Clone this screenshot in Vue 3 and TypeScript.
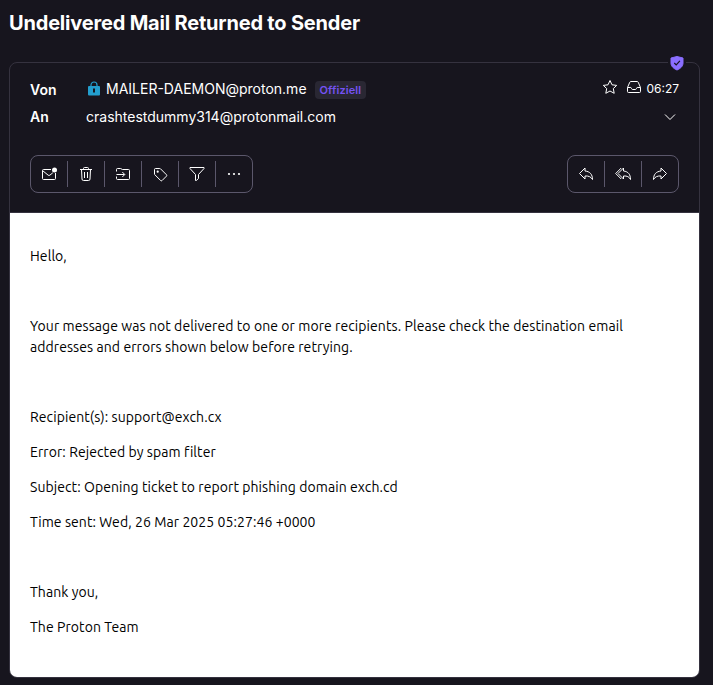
<script setup lang="ts">
interface IconDef {
  name: string
  label: string
}

const leftActions: IconDef[] = [
  { name: 'unread', label: 'Als ungelesen markieren' },
  { name: 'trash', label: 'In den Papierkorb' },
  { name: 'move', label: 'Verschieben' },
  { name: 'tag', label: 'Label' },
  { name: 'filter', label: 'Filtern' },
  { name: 'more', label: 'Mehr' },
]

const rightActions: IconDef[] = [
  { name: 'reply', label: 'Antworten' },
  { name: 'replyAll', label: 'Allen antworten' },
  { name: 'forward', label: 'Weiterleiten' },
]

const strokes: Record<string, string> = {
  unread: 'M10 3.5H2.500a1 1 0 0 0-1 1v8a1 1 0 0 0 1 1h11a1 1 0 0 0 1-1V7M1.800 4.800l5.400 4.400a1.300 1.300 0 0 0 1.600 0L11.800 6.800',
  trash: 'M2 3.500h12M5.500 3.300V2.500a1 1 0 0 1 1-1h3a1 1 0 0 1 1 1v.8M3.500 3.700l.5 9.300a1.500 1.500 0 0 0 1.500 1.500h5A1.500 1.500 0 0 0 12 13l.5-9.300M6.500 6v6M9.500 6v6',
  move: 'M1.500 5.500V3.500a1 1 0 0 1 1-1h3l2 1h6a1 1 0 0 1 1 1v8a1 1 0 0 1-1 1h-11a1 1 0 0 1-1-1v-2M1.500 8.500h8M7.300 6l2.500 2.500-2.500 2.500',
  tag: 'M2.500 3.500a1 1 0 0 1 1-1h4.300a1 1 0 0 1 .7.300l6 6a1 1 0 0 1 0 1.300l-4.500 4.500a1 1 0 0 1-1.300 0l-5.900-5.900a1 1 0 0 1-.3-.7z',
  filter: 'M1 1.500h14v1L9.500 8.500v4L7.300 14.500H6.500v-6L1 2.500z',
  reply: 'M7 2 1.500 7.500 7 13v-3c3.500-.3 6 .8 7.500 3.500 0-5-2.500-8-7.500-8.500z',
  replyAll: 'M8.500 2 3 7.500 8.500 13v-3c3.500-.3 5.800.8 7 3.500 0-5-2.200-8-7-8.500zM6.200 2 .7 7.500 6.200 13',
  forward: 'M9 2l5.500 5.500L9 13v-3c-3.500-.3-6 .8-7.500 3.500 0-5 2.500-8 7.500-8.500z',
}

const details: string[] = [
  'Recipient(s): support@exch.cx',
  'Error: Rejected by spam filter',
  'Subject: Opening ticket to report phishing domain exch.cd',
  'Time sent: Wed, 26 Mar 2025 05:27:46 +0000',
]
</script>

<template>
  <main class="view">
    <h1 class="subject">Undelivered Mail Returned to Sender</h1>
    <article class="card">
      <svg class="shield" viewBox="0 0 14 16">
        <path d="M7 1.500 13 3v5c0 3.300-2.500 5.500-6 7-3.500-1.500-6-3.700-6-7V3z" fill="#8a6eff" stroke="#8a6eff" stroke-width="1" stroke-linejoin="round" />
        <path d="m4.300 8 1.900 1.900 3.700-4" fill="none" stroke="#17151e" stroke-width="1.200" />
      </svg>

      <header class="head">
        <div class="row">
          <span class="label">Von</span>
          <svg class="lock" viewBox="0 0 12 15">
            <path d="M3 6V4a3 3 0 0 1 6 0v2" fill="none" stroke="#239ece" stroke-width="1.200" />
            <rect y="5" width="12" height="9.500" rx="1" fill="#239ece" />
            <path d="M5 7.500h2v4H5z" fill="#17151e" />
          </svg>
          <span class="address">MAILER-DAEMON@proton.me</span>
          <span class="badge">Offiziell</span>
          <span class="meta">
            <svg class="icon star" viewBox="0 0 16 16">
              <path d="m8 1.500 2 4.300 4.700.6-3.400 3.200.9 4.700L8 12l-4.200 2.300.9-4.700-3.400-3.200L6 5.800z" />
            </svg>
            <svg class="icon inbox" viewBox="0 0 16 16">
              <path d="M1.500 8.500 3.800 3.200a1.200 1.200 0 0 1 1.100-.7h6.200a1.200 1.200 0 0 1 1.100.7l2.300 5.300v4a1 1 0 0 1-1 1h-11a1 1 0 0 1-1-1zM1.500 8.500h3.300c.7 0 .7 2 1.700 2h3c1 0 1-2 1.700-2h3.300" />
            </svg>
            <time class="time">06:27</time>
          </span>
        </div>
        <div class="row second">
          <span class="label">An</span>
          <span class="address">crashtestdummy314@protonmail.com</span>
          <svg class="chevron" viewBox="0 0 16 16"><path d="m3 5.500 5 5 5-5" /></svg>
        </div>

        <div class="toolbar">
          <div v-for="(group, i) in [leftActions, rightActions]" :key="i" class="group">
            <button v-for="action in group" :key="action.name" class="action" :aria-label="action.label">
              <svg class="icon" viewBox="0 0 16 16">
                <path v-if="strokes[action.name]" :d="strokes[action.name]" />
                <circle v-if="action.name === 'unread'" class="solid" cx="13.500" cy="4" r="2.500" />
                <circle v-if="action.name === 'tag'" class="solid" cx="5.700" cy="5.700" r="1.100" />
                <g v-if="action.name === 'more'" class="solid">
                  <circle cx="3" cy="8" r="1.100" />
                  <circle cx="8" cy="8" r="1.100" />
                  <circle cx="13" cy="8" r="1.100" />
                </g>
              </svg>
            </button>
          </div>
        </div>
      </header>

      <section class="body">
        <p class="greeting">Hello,</p>
        <p class="intro">
          Your message was not delivered to one or more recipients. Please check the destination email
          addresses and errors shown below before retrying.
        </p>
        <p v-for="detail in details" :key="detail">{{ detail }}</p>
        <p class="closing">Thank you,</p>
        <p>The Proton Team</p>
      </section>
    </article>
  </main>
</template>

<style>
body {
  background: #17151e;
}
</style>

<style scoped>
.view {
  box-sizing: border-box;
  height: 685px;
  padding: 8px 13px 7px 9px;
  display: flex;
  flex-direction: column;
  background: #17151e;
  color: #fff;
  font-family: Inter, sans-serif;
}
.subject {
  margin: 0 0 24px;
  font-size: 20px;
  line-height: 30px;
  font-weight: 700;
  letter-spacing: -0.19px;
  white-space: nowrap;
}
.card {
  position: relative;
  flex: 1;
  display: flex;
  flex-direction: column;
  border: 1px solid #35323f;
  border-radius: 8px;
}
.shield {
  position: absolute;
  right: 13px;
  top: -8px;
  width: 14px;
  height: 16px;
  padding: 0 2px;
  background: #17151e;
}
.head {
  box-sizing: border-box;
  height: 150px;
  padding: 16px 20px 0;
  border-bottom: 1px solid #35323f;
}
.row {
  display: flex;
  align-items: center;
  height: 20px;
}
.second {
  margin-top: 8px;
}
.label {
  width: 56px;
  font-size: 14px;
  font-weight: 600;
}
.second .label {
  padding-bottom: 2px;
}
.lock {
  width: 12px;
  height: 15px;
  margin: 0 6px 2px 2px;
}
.address {
  padding-bottom: 2px;
  font-size: 14px;
}
.badge {
  margin: 2px 0 0 8px;
  padding: 0 5px;
  height: 18px;
  line-height: 18px;
  border-radius: 4px;
  background: #292733;
  color: #7452f2;
  font-size: 11px;
  font-weight: 600;
  letter-spacing: 0.1px;
}
.meta {
  display: flex;
  align-items: center;
  margin-left: auto;
  padding-bottom: 2px;
}
.icon,
.chevron {
  width: 16px;
  height: 16px;
  fill: none;
  stroke: #fff;
  stroke-width: 1;
  stroke-linejoin: round;
}
.star,
.inbox {
  padding-bottom: 2px;
}
.inbox {
  margin: 0 4px 0 8px;
}
.time {
  font-size: 12px;
}
.chevron {
  margin-left: auto;
  margin-right: 1px;
}
.toolbar {
  display: flex;
  justify-content: space-between;
  margin-top: 28px;
}
.group {
  display: flex;
  align-items: center;
  box-sizing: border-box;
  height: 38px;
  border: 1px solid #5b576b;
  border-radius: 8px;
}
.action {
  box-sizing: border-box;
  display: flex;
  align-items: center;
  justify-content: center;
  width: 37px;
  height: 26px;
  padding: 0;
  border: 0;
  border-right: 1px solid #5b576b;
  background: none;
}
.action:last-child {
  width: 36px;
  border-right: 0;
}
.solid {
  fill: #fff;
  stroke: none;
}
.body {
  flex: 1;
  padding: 33px 20px 0;
  border-radius: 0 0 7px 7px;
  background: #fff;
  color: #000;
  font-family: Ubuntu, "Noto Sans", sans-serif;
  font-size: 14px;
  line-height: 21px;
  letter-spacing: 0.075px;
}
.body p {
  margin: 0 0 14px;
}
.body .greeting,
.body .intro {
  margin-bottom: 49px;
}
.body .intro {
  margin-right: -10px;
}
.body .closing {
  margin-top: 49px;
}
</style>
